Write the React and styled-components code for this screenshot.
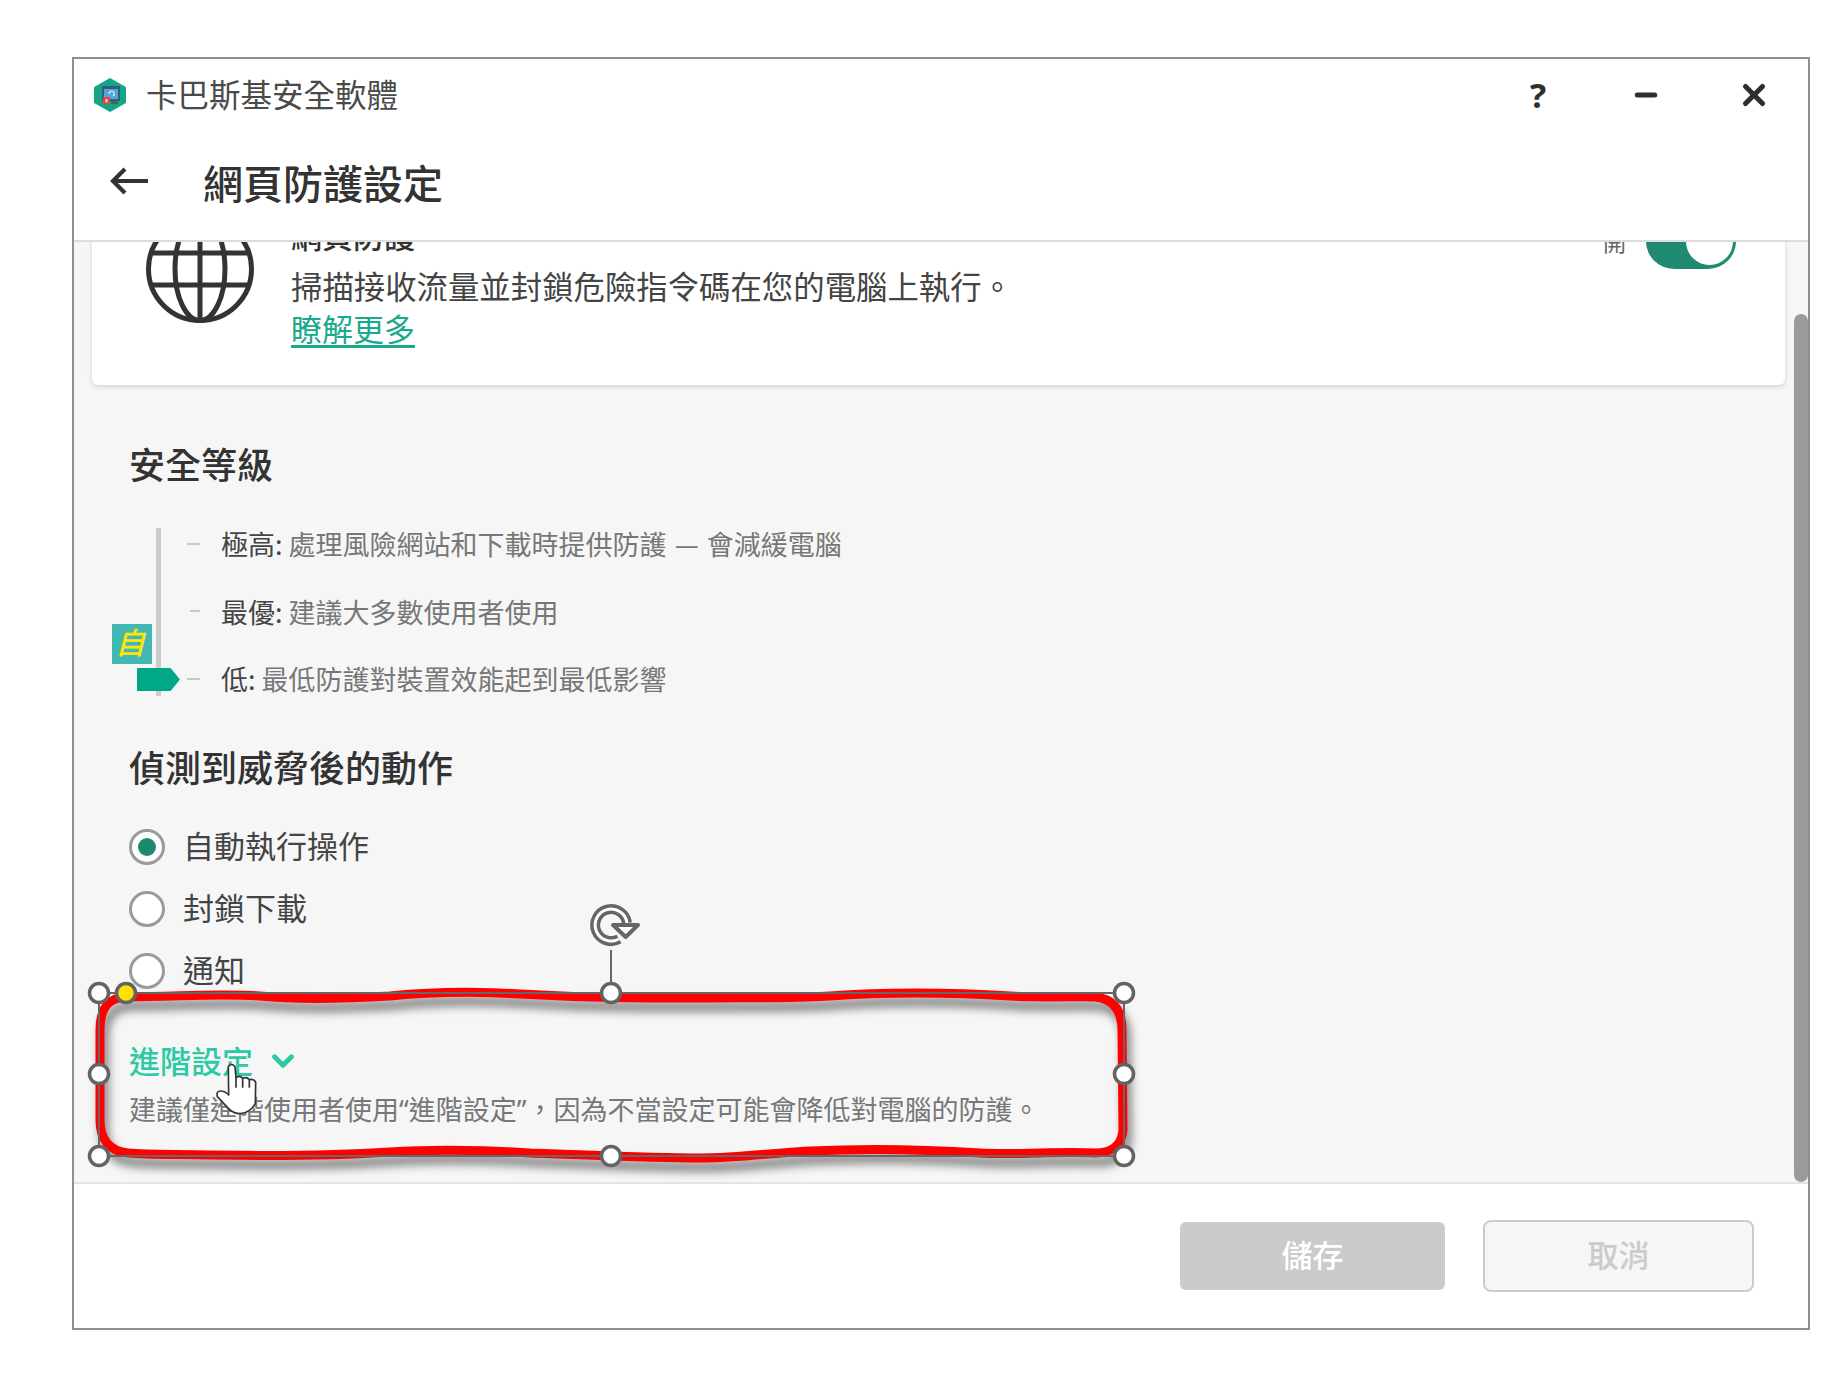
import React from "react";
import styled, { createGlobalStyle } from "styled-components";
import { ChevronDown, Minus, X } from "lucide-react";

const FONT = `"Noto Sans CJK TC", "Noto Sans", sans-serif`;

const GlobalStyle = createGlobalStyle`
  html, body {
    margin: 0;
    background: #fff;
  }
  body {
    font-family: ${FONT};
    color: #444;
  }
`;

const Page = styled.div`
  position: relative;
  width: 1843px;
  height: 1388px;
  padding: 57px 0 0 72px;
  box-sizing: border-box;
  overflow: hidden;
`;

const Window = styled.div`
  width: 1738px;
  height: 1273px;
  box-sizing: border-box;
  border: 2px solid #87939a;
  background: #fff;
  display: flex;
  flex-direction: column;
`;

const TitleBar = styled.div`
  height: 72px;
  flex: none;
  display: flex;
  align-items: center;
  padding-left: 20px;
`;

const AppName = styled.div`
  margin-left: 20px;
  padding-bottom: 4px;
  font-size: 31.5px;
  line-height: 68px;
  color: #4a4a4a;
  flex: 1;
`;

const WindowButton = styled.div`
  width: 108px;
  height: 72px;
  display: flex;
  align-items: center;
  justify-content: center;
  color: #2f2f2f;
  font-family: "Open Sans", sans-serif;
  font-size: 34px;
  font-weight: 700;
`;

const Header = styled.div`
  height: 111px;
  flex: none;
  box-sizing: border-box;
  border-bottom: 2px solid #dcdcdc;
  display: flex;
  align-items: center;
  padding: 0 0 0 36px;
  gap: 55px;
  color: #333;
`;

const BackIcon = styled.svg`
  margin-bottom: 10px;
`;

const PageTitle = styled.h1`
  margin: 0;
  padding-bottom: 8px;
  font-size: 40px;
  line-height: 56px;
  font-weight: 500;
  color: #333;
`;

const Body = styled.div`
  flex: 1;
  min-height: 0;
  position: relative;
  overflow: hidden;
  background: #f6f6f6;
`;

const Scrolled = styled.div`
  margin-top: -43px;
  padding-left: 18px;
`;

const Scrollbar = styled.div`
  position: absolute;
  top: 72px;
  bottom: 0;
  right: 0;
  width: 14px;
  border-radius: 8px;
  background: #9b9b9b;
`;

const Card = styled.div`
  width: 1693px;
  box-sizing: border-box;
  padding: 16px 49px 36px 54px;
  background: #fff;
  border-radius: 6px;
  box-shadow: 0 2px 5px rgba(0, 0, 0, 0.14);
  display: flex;
  align-items: flex-start;
`;

const CardText = styled.div`
  flex: 1;
  margin: 2px 0 0 37px;
`;

const CardTitle = styled.div`
  font-size: 31px;
  line-height: 42px;
  font-weight: 500;
  margin: -3px 0 9px;
  color: #333;
`;

const CardDesc = styled.div`
  font-size: 31.4px;
  line-height: 42px;
  color: #444;
`;

const LearnMore = styled.a`
  display: block;
  font-size: 31px;
  line-height: 42px;
  color: #19a98c;
  text-decoration: underline;
  text-underline-offset: 4px;
`;

const ToggleBox = styled.div`
  display: flex;
  align-items: center;
  gap: 20px;
  margin-top: -2px;
`;

const ToggleLabel = styled.span`
  font-size: 23px;
  color: #666;
`;

const Toggle = styled.div`
  width: 90px;
  height: 56px;
  border-radius: 28px;
  background: #208a70;
  display: flex;
  align-items: center;
  justify-content: flex-end;
  padding-right: 3px;
  box-sizing: border-box;
`;

const ToggleKnob = styled.div`
  width: 47px;
  height: 47px;
  border-radius: 50%;
  background: #fff;
`;

const Section = styled.div`
  padding-left: 37px;
`;

const SectionTitle = styled.h2`
  margin: ${(p) => p.$top}px 0 0;
  font-size: 36px;
  line-height: 50px;
  font-weight: 500;
  color: #333;
`;

const LevelGroup = styled.div`
  position: relative;
  display: flex;
  margin-top: 22px;
  margin-left: 27px;
`;

const Track = styled.div`
  width: 5px;
  margin: 17.5px 26px 16.5px 0;
  background: #cccccc;
`;

const LevelList = styled.div`
  display: flex;
  flex-direction: column;
`;

const LevelRow = styled.div`
  height: 67.5px;
  display: flex;
  align-items: center;
  font-size: 27px;
  color: #777;
`;

const TickBox = styled.div`
  width: 13px;
  margin-right: 21px;
  display: flex;
  justify-content: flex-end;
`;

const Tick = styled.div`
  width: ${(p) => p.$w}px;
  height: 2px;
  background: #c8c8c8;
`;

const LevelName = styled.span`
  color: #444;
`;

const Dash = styled.span`
  margin: 0 2px;
`;

const AutoBadge = styled.div`
  position: absolute;
  left: -44px;
  top: 114px;
  width: 40px;
  height: 40px;
  background: #42b8b4;
  color: #ffe600;
  font-size: 30px;
  font-weight: 500;
  line-height: 35px;
  font-style: italic;
  text-align: center;
  text-indent: -4px;
`;

const Thumb = styled.div`
  position: absolute;
  left: -19px;
  top: 158px;
  width: 43px;
  height: 23px;
  background: #00a88a;
  clip-path: polygon(0 0, 78% 0, 100% 50%, 78% 100%, 0 100%);
`;

const RadioList = styled.div`
  margin-top: 23px;
  display: flex;
  flex-direction: column;
`;

const RadioRow = styled.div`
  height: 62px;
  display: flex;
  align-items: center;
  gap: 18px;
  font-size: 31px;
  color: #444;
`;

const RadioCircle = styled.div`
  width: 36px;
  height: 36px;
  margin-top: 5px;
  box-sizing: border-box;
  border: 3px solid #9a9a9a;
  border-radius: 50%;
  background: #fff;
  display: flex;
  align-items: center;
  justify-content: center;
  &::after {
    content: "";
    display: ${(p) => (p.$on ? "block" : "none")};
    width: 18px;
    height: 18px;
    border-radius: 50%;
    background: #1d8a70;
  }
`;

const AdvancedRow = styled.div`
  margin-top: 39px;
  display: flex;
  align-items: center;
  gap: 13px;
  font-size: 31px;
  line-height: 42px;
  font-weight: 500;
  color: #2bc9a5;
`;

const AdvancedChevron = styled(ChevronDown)`
  margin-top: 3px;
`;

const AdvancedNote = styled.div`
  margin-top: 9px;
  font-family: "Noto Sans", "Noto Sans CJK TC", sans-serif;
  font-size: 27px;
  line-height: 40px;
  color: #777;
`;

const Footer = styled.div`
  height: 146px;
  flex: none;
  box-sizing: border-box;
  border-top: 2px solid #e4e4e4;
  display: flex;
  align-items: center;
  justify-content: flex-end;
  gap: 38px;
  padding-right: 54px;
`;

const SaveButton = styled.div`
  width: 265px;
  height: 68px;
  box-sizing: border-box;
  padding-bottom: 6px;
  border-radius: 6px;
  background: #cbcbcb;
  color: #fff;
  font-size: 31px;
  font-weight: 500;
  display: flex;
  align-items: center;
  justify-content: center;
`;

const CancelButton = styled.div`
  width: 271px;
  height: 72px;
  box-sizing: border-box;
  padding-bottom: 6px;
  border: 2px solid #cbcbcb;
  border-radius: 8px;
  background: #f6f6f6;
  color: #cbcbcb;
  font-size: 31px;
  font-weight: 500;
  display: flex;
  align-items: center;
  justify-content: center;
`;

const Annotation = styled.svg`
  position: absolute;
  left: 0;
  top: 0;
  width: 1843px;
  height: 1388px;
  pointer-events: none;
`;

const RedStroke = styled.g`
  filter: drop-shadow(4px 9px 5px rgba(0, 0, 0, 0.5));
`;

const Logo = () => (
  <svg width="32" height="34" viewBox="0 0 32 34">
    <path d="M16 0 L31 8.5 Q32 9 32 10 V24 Q32 25 31 25.5 L16 34 L1 25.5 Q0 25 0 24 V10 Q0 9 1 8.5 Z" fill="#13a586" />
    <rect x="8" y="8" width="18" height="15" fill="#3c5a78" />
    <rect x="10" y="11" width="14" height="10" fill="#4aa8dc" />
    <path d="M15 16 a2.6 2.6 0 1 1 4 2" fill="none" stroke="#d6eefa" strokeWidth="1.3" />
    <rect x="9" y="19" width="7" height="7" fill="#e5433f" />
    <rect x="11.5" y="21" width="2" height="3.4" fill="#fbd5d0" />
    <rect x="17" y="23" width="7" height="3" fill="#3f6b4f" />
  </svg>
);

const Globe = () => (
  <svg width="108" height="108" viewBox="0 0 108 108" fill="none" stroke="#333" strokeWidth="5">
    <circle cx="54" cy="54" r="51.5" />
    <ellipse cx="54" cy="54" rx="25" ry="51.5" />
    <path d="M54 2 V106 M6 38 H102 M6 70 H102" />
  </svg>
);

const Handle = ({ x, y, fill = "#fff" }) => (
  <circle cx={x} cy={y} r="9.5" fill={fill} stroke="#636363" strokeWidth="3.5" />
);

const levels = [
  {
    name: "極高:",
    text: (
      <>
        {" 處理風險網站和下載時提供防護 "}
        <Dash>—</Dash>
        {" 會減緩電腦"}
      </>
    ),
    tick: 13,
  },
  { name: "最優:", text: " 建議大多數使用者使用", tick: 10 },
  { name: "低:", text: " 最低防護對裝置效能起到最低影響", tick: 13 },
];

const actions = ["自動執行操作", "封鎖下載", "通知"];

const App = () => {
  return (
    <>
      <GlobalStyle />
      <Page>
        <Window>
          <TitleBar>
            <Logo />
            <AppName>卡巴斯基安全軟體</AppName>
            <WindowButton>?</WindowButton>
            <WindowButton>
              <Minus size={30} strokeWidth={4} />
            </WindowButton>
            <WindowButton>
              <X size={34} strokeWidth={3.6} />
            </WindowButton>
          </TitleBar>
          <Header>
            <BackIcon width="38" height="28" viewBox="0 0 38 28" fill="none" stroke="#333" strokeWidth="4.2">
              <path d="M38 14 H3 M15 2 L3 14 L15 26" />
            </BackIcon>
            <PageTitle>網頁防護設定</PageTitle>
          </Header>
          <Body>
            <Scrolled>
              <Card>
                <Globe />
                <CardText>
                  <CardTitle>網頁防護</CardTitle>
                  <CardDesc>掃描接收流量並封鎖危險指令碼在您的電腦上執行。</CardDesc>
                  <LearnMore>瞭解更多</LearnMore>
                </CardText>
                <ToggleBox>
                  <ToggleLabel>開</ToggleLabel>
                  <Toggle>
                    <ToggleKnob />
                  </Toggle>
                </ToggleBox>
              </Card>
              <Section>
                <SectionTitle $top={53}>安全等級</SectionTitle>
                <LevelGroup>
                  <AutoBadge>自</AutoBadge>
                  <Thumb />
                  <Track />
                  <LevelList>
                    {levels.map((l) => (
                      <LevelRow key={l.name}>
                        <TickBox>
                          <Tick $w={l.tick} />
                        </TickBox>
                        <span>
                          <LevelName>{l.name}</LevelName>
                          {l.text}
                        </span>
                      </LevelRow>
                    ))}
                  </LevelList>
                </LevelGroup>
                <SectionTitle $top={28}>偵測到威脅後的動作</SectionTitle>
                <RadioList>
                  {actions.map((a, i) => (
                    <RadioRow key={a}>
                      <RadioCircle $on={i === 0} />
                      {a}
                    </RadioRow>
                  ))}
                </RadioList>
                <AdvancedRow>
                  進階設定
                  <AdvancedChevron size={34} strokeWidth={3.4} />
                </AdvancedRow>
                <AdvancedNote>建議僅進階使用者使用“進階設定”，因為不當設定可能會降低對電腦的防護。</AdvancedNote>
              </Section>
            </Scrolled>
            <Scrollbar />
          </Body>
          <Footer>
            <SaveButton>儲存</SaveButton>
            <CancelButton>取消</CancelButton>
          </Footer>
        </Window>

        <Annotation viewBox="0 0 1843 1388">
          <RedStroke>
            <path
              d="M126 997 C180 997 210 993 260 996 C300 1000 340 999 390 996 C430 992 470 991 520 994 C590 998 640 998 700 998 C760 997 780 999 830 996 C880 992 950 992 1010 996 C1050 998 1080 996 1095 997 C1115 999 1122 1012 1122 1030 L1123 1130 C1122 1145 1112 1153 1095 1153 C1060 1151 1020 1155 980 1153 C920 1149 870 1148 810 1151 C770 1153 740 1158 700 1158 C650 1158 590 1155 530 1153 C480 1150 440 1149 390 1152 C330 1156 270 1156 210 1155 C180 1154 150 1155 128 1153 C108 1151 100 1138 100 1120 L100 1030 C100 1008 108 998 126 997 Z"
              fill="none"
              stroke="#ff0000"
              strokeWidth="9"
            />
          </RedStroke>
          <rect x="99" y="993" width="1025" height="163" fill="none" stroke="#666" strokeWidth="2" />
          <path d="M611 950 V984" stroke="#666" strokeWidth="2" />
          <path d="M619 939 A16 16 0 1 1 627 923" fill="none" stroke="#666" strokeWidth="10" />
          <path d="M619 939 A16 16 0 1 1 627 923" fill="none" stroke="#fff" strokeWidth="3" />
          <path d="M613 925 H638 L625.7 937 Z" fill="#fff" stroke="#666" strokeWidth="4" strokeLinejoin="round" />
          <Handle x={99} y={993} />
          <Handle x={611} y={993} />
          <Handle x={1124} y={993} />
          <Handle x={99} y={1074} />
          <Handle x={1124} y={1074} />
          <Handle x={99} y={1156} />
          <Handle x={611} y={1156} />
          <Handle x={1124} y={1156} />
          <Handle x={126} y={993} fill="#ffe000" />
          <g transform="translate(210 1055) scale(0.3333)">
            <path
              d="M55 35 Q65 22 75 35 L78 68 Q90 60 98 70 Q110 64 118 74 Q132 70 137 82 L136 145 Q122 172 92 176 Q70 176 55 160 L22 125 Q18 108 32 108 Q45 108 56 120 Z"
              fill="#fff"
              stroke="#333"
              strokeWidth="5"
              strokeLinejoin="round"
            />
            <path d="M78 68 V98 M98 70 V98 M118 74 V98" stroke="#333" strokeWidth="5" fill="none" />
          </g>
        </Annotation>
      </Page>
    </>
  );
};

export default App;
